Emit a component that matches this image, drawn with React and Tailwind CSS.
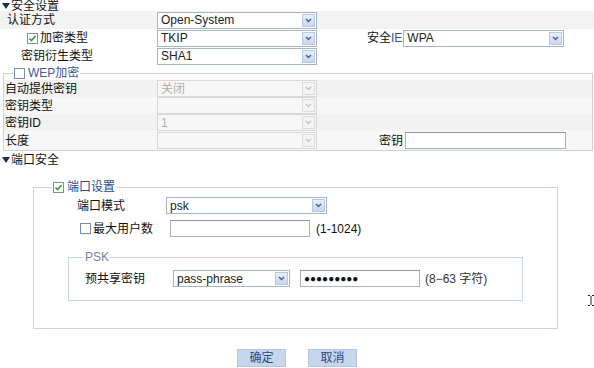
const font = { fontFamily: '"Liberation Sans", "Noto Sans CJK SC", sans-serif' }

function Arrow({ disabled }) {
  return (
    <span className={`ml-auto mr-[1px] w-[13px] h-[13px] flex items-center justify-center border ${disabled ? 'border-[#dcdcdc] bg-[#f4f4f4]' : 'border-[#b7c8e4] bg-gradient-to-b from-[#e8effa] to-[#c7d7f0]'}`}>
      <svg width="7" height="5" viewBox="0 0 7 5">
        <path d="M1 1 L3.5 3.5 L6 1" fill="none" stroke={disabled ? '#c4c4c4' : '#4b5f86'} strokeWidth="1.4" />
      </svg>
    </span>
  )
}

function Select({ value, w, disabled }) {
  return (
    <div className={`${w} h-[17px] flex items-center border ${disabled ? 'border-[#d8d8d8] bg-[#f7f7f7] text-[#b0b0b0]' : 'border-[#a7b4c8] bg-white text-[#222]'}`}>
      <span className="pl-[3px] leading-none">{value}</span>
      <Arrow disabled={disabled} />
    </div>
  )
}

function Input({ w, children }) {
  return (
    <div className={`${w} h-[17px] flex items-center border border-[#a9b1bd] border-t-[#8e96a3] bg-white pl-[3px] leading-none`}>
      {children}
    </div>
  )
}

function Box({ checked }) {
  return (
    <svg width="11" height="11" viewBox="0 0 11 11" className="shrink-0">
      <rect x="0.5" y="0.5" width="10" height="10" fill="white" stroke="#7d8ea8" />
      {checked && <path d="M2.5 5.5 L4.5 7.5 L8.5 3" fill="none" stroke="#2f9a3a" strokeWidth="1.6" />}
    </svg>
  )
}

function Tri() {
  return (
    <svg width="8" height="6" viewBox="0 0 8 6" className="mr-[1px] shrink-0">
      <path d="M0 0 H8 L4 6 Z" fill="#1d2f55" />
    </svg>
  )
}

export default function App() {
  return (
    <div className="w-[594px] h-[368px] bg-white relative overflow-hidden text-[12px] text-[#111]" style={font}>
      <div className="h-[11px] flex items-center pl-[2px] leading-none">
        <Tri />安全设置
      </div>

      <div className="h-[18px] bg-[#f3f3f3] flex items-center">
        <span className="w-[157px] pl-[7px]">认证方式</span>
        <Select value="Open-System" w="w-[160px]" />
      </div>
      <div className="h-[18px] flex items-center">
        <span className="w-[157px] pl-[27px] flex items-center gap-[2px]"><Box checked />加密类型</span>
        <Select value="TKIP" w="w-[160px]" />
        <span className="ml-[50px] mr-[1px]">安全<span className="text-[#3a4fa0]">IE</span></span>
        <Select value="WPA" w="w-[161px]" />
      </div>
      <div className="h-[18px] flex items-center">
        <span className="w-[157px] pl-[21px]">密钥衍生类型</span>
        <Select value="SHA1" w="w-[160px]" />
      </div>

      <fieldset className="mt-[2px] ml-[3px] mr-[1px] border border-[#c9d3e1]">
        <legend className="ml-[9px] px-[1px] h-[12px] flex items-center gap-[3px] leading-none text-[#3b5a94]">
          <Box />WEP加密
        </legend>
        <div className="pt-[1px]">
          <div className="h-[17px] flex items-center bg-[#f2f2f2]">
            <span className="w-[153px] pl-[1px]">自动提供密钥</span>
            <Select value="关闭" w="w-[160px]" disabled />
          </div>
          <div className="h-[17px] flex items-center bg-[#f7f7f7]">
            <span className="w-[153px] pl-[1px]">密钥类型</span>
            <Select value="" w="w-[160px]" disabled />
          </div>
          <div className="h-[17px] flex items-center bg-[#f2f2f2]">
            <span className="w-[153px] pl-[1px]">密钥ID</span>
            <Select value="1" w="w-[160px]" disabled />
          </div>
          <div className="h-[19px] flex items-center bg-[#f7f7f7]">
            <span className="w-[153px] pl-[1px]">长度</span>
            <Select value="" w="w-[160px]" disabled />
            <span className="ml-[62px] mr-[2px]">密钥</span>
            <Input w="w-[161px]" />
          </div>
        </div>
      </fieldset>

      <div className="mt-[3px] h-[12px] flex items-center pl-[2px] leading-none">
        <Tri />端口安全
      </div>

      <fieldset className="mt-[15px] ml-[33px] w-[525px] border border-[#c9d3e1] pb-[27px]">
        <legend className="ml-[18px] px-[1px] h-[12px] flex items-center gap-[3px] leading-none text-[#2d4b8c]">
          <Box checked />端口设置
        </legend>
        <div className="mt-[4px] h-[17px] flex items-center">
          <span className="w-[132px] pl-[43px]">端口模式</span>
          <Select value="psk" w="w-[161px]" />
        </div>
        <div className="mt-[6px] h-[17px] flex items-center">
          <span className="w-[136px] pl-[46px] flex items-center gap-[2px]"><Box />最大用户数</span>
          <Input w="w-[140px]" />
          <span className="ml-[6px]">(1-1024)</span>
        </div>

        <fieldset className="mt-[14px] ml-[34px] w-[455px] border border-[#c9d3e1] pb-[13px]">
          <legend className="ml-[15px] px-[1px] h-[12px] flex items-center leading-none text-[#7283a3]">PSK</legend>
          <div className="mt-[7px] h-[17px] flex items-center">
            <span className="w-[104px] pl-[16px]">预共享密钥</span>
            <Select value="pass-phrase" w="w-[117px]" />
            <div className="ml-[10px]">
              <Input w="w-[120px]"><span className="text-[10px]">●●●●●●●●●</span></Input>
            </div>
            <span className="ml-[5px] text-[#333]">(8−63 字符)</span>
          </div>
        </fieldset>
      </fieldset>

      <div className="mt-[20px] flex justify-center gap-[22px]">
        <button className="w-[49px] h-[18px] bg-[#c6d6ec] border border-[#b3c5df] text-[#2b4a80] leading-none">确定</button>
        <button className="w-[49px] h-[18px] bg-[#c6d6ec] border border-[#b3c5df] text-[#2b4a80] leading-none">取消</button>
      </div>

      <svg className="absolute left-[588px] top-[295px]" width="6" height="11" viewBox="0 0 6 11">
        <path d="M0 0.5 H2 M4 0.5 H6 M3 1 V10 M0 10.5 H2 M4 10.5 H6" stroke="#222" strokeWidth="1" fill="none" />
      </svg>
    </div>
  )
}
